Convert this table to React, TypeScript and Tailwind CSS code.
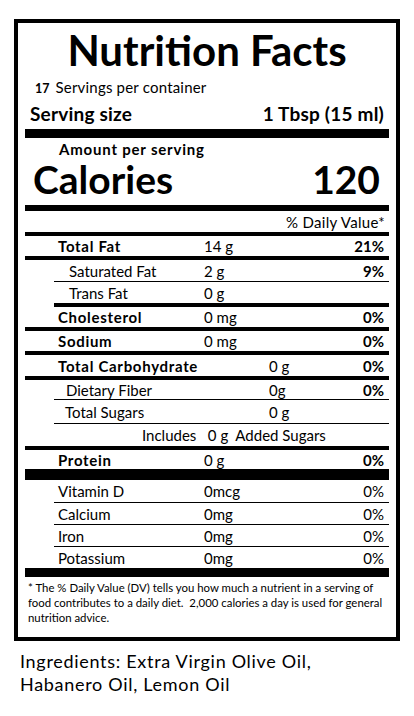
import React from "react";

type Row = {
  label: string;
  amount?: string;
  pct?: string;
  bold?: boolean;
  pctBold?: boolean;
  indent?: boolean;
  textPad: string;
  labelW: string;
  h: string;
  line: string;
};

const rows: Row[] = [
  { label: "Total Fat", amount: "14 g", pct: "21%", bold: true, pctBold: true, textPad: "pl-[33px]", labelW: "w-[179px]", h: "h-[24px]", line: "border-b-4" },
  { label: "Saturated Fat", amount: "2 g", pct: "9%", pctBold: true, indent: true, textPad: "pl-[15px]", labelW: "w-[150px]", h: "h-[22px]", line: "border-b" },
  { label: "Trans Fat", amount: "0 g", indent: true, textPad: "pl-[15px]", labelW: "w-[150px]", h: "h-[25px]", line: "border-b-4" },
  { label: "Cholesterol", amount: "0 mg", pct: "0%", bold: true, pctBold: true, textPad: "pl-[33px]", labelW: "w-[179px]", h: "h-[24px]", line: "border-b-4" },
  { label: "Sodium", amount: "0 mg", pct: "0%", bold: true, pctBold: true, textPad: "pl-[33px]", labelW: "w-[179px]", h: "h-[24px]", line: "border-b-4" },
  { label: "Total Carbohydrate", amount: "0 g", pct: "0%", bold: true, pctBold: true, textPad: "pl-[33px]", labelW: "w-[244px]", h: "h-[25px]", line: "border-b-4" },
  { label: "Dietary Fiber", amount: "0g", pct: "0%", pctBold: true, indent: true, textPad: "pl-[12px]", labelW: "w-[215px]", h: "h-[20px]", line: "border-b" },
  { label: "Total Sugars", amount: "0 g", indent: true, textPad: "pl-[11px]", labelW: "w-[215px]", h: "h-[24px]", line: "border-b" },
];

const vitamins = [
  { label: "Vitamin D", amount: "0mcg", h: "h-[23px]" },
  { label: "Calcium", amount: "0mg", h: "h-[22px]" },
  { label: "Iron", amount: "0mg", h: "h-[22px]" },
  { label: "Potassium", amount: "0mg", h: "h-[21px]" },
];

function NutrientRow({ r }: { r: Row }) {
  return (
    <div className={`flex items-center border-black ${r.h} ${r.line} ${r.indent ? "ml-[29px]" : ""}`}>
      <div className={`${r.labelW} ${r.textPad} ${r.bold ? "font-bold tracking-[0.7px]" : ""} shrink-0`}>{r.label}</div>
      <div className="flex-1">{r.amount}</div>
      <div className={`pr-[5px] ${r.pctBold ? "font-bold" : ""}`}>{r.pct}</div>
    </div>
  );
}

export default function App() {
  return (
    <div className="w-[414px] h-[716px] bg-white text-black font-['Lato','Liberation_Sans',sans-serif] overflow-hidden">
      <div className="pt-[19px] px-[14px]">
        <div className="h-[622px] border-4 border-black px-[7px] text-[15px] leading-[18px]">
          <div className="text-center text-[42px] leading-[55px] font-bold">Nutrition Facts</div>
          <div className="leading-[18px] pl-[10px]">
            <span className="font-bold text-[12.5px] mr-[6px]">17</span>
            <span className="text-[15px] tracking-[0.2px]">Servings per container</span>
          </div>
          <div className="flex justify-between text-[19px] leading-[31px] font-bold tracking-[0.2px] pl-[5px] pr-[5px]">
            <span>Serving size</span>
            <span>1 Tbsp (15 ml)</span>
          </div>
          <div className="h-[9px] bg-black" />
          <div className="pl-[34px] font-bold text-[15px] tracking-[0.8px] leading-[22px]">Amount per serving</div>
          <div className="flex justify-between text-[39px] leading-[39px] font-bold pl-[8px] pr-[9px] pb-[6px]">
            <span>Calories</span>
            <span>120</span>
          </div>
          <div className="h-[6px] bg-black" />
          <div className="h-[25px] flex items-center justify-end pr-[4px] tracking-[0.3px] border-b-4 border-black">% Daily Value*</div>
          {rows.map((r) => (
            <NutrientRow key={r.label} r={r} />
          ))}
          <div className="h-[26px] flex items-center border-b-4 border-black pl-[117px]">
            Includes&nbsp;&nbsp; 0 g&nbsp; Added Sugars
          </div>
          <div className="h-[19px] flex items-center">
            <div className="w-[179px] pl-[33px] font-bold tracking-[0.7px] shrink-0">Protein</div>
            <div className="flex-1">0 g</div>
            <div className="pr-[5px] font-bold">0%</div>
          </div>
          <div className="h-[11px] bg-black" />
          {vitamins.map((v) => (
            <div key={v.label} className={`flex items-center ${v.h} ${v.label === "Potassium" ? "" : "border-b border-black ml-[29px]"}`}>
              <div className={`${v.label === "Potassium" ? "w-[179px] pl-[33px]" : "w-[150px] pl-[4px]"} shrink-0`}>{v.label}</div>
              <div className="flex-1">{v.amount}</div>
              <div className="pr-[5px]">0%</div>
            </div>
          ))}
          <div className="h-[9px] bg-black" />
          <p className="pt-[3px] pl-[3px] pr-[1px] text-[11.4px] leading-[15px]">
            * The % Daily Value (DV) tells you how much a nutrient in a serving of food contributes to a daily diet.&nbsp; 2,000 calories a day is used for general nutrition advice.
          </p>
        </div>
      </div>
      <p className="mt-[9px] pl-[20px] pr-[60px] text-[18px] tracking-[0.7px] leading-[23px]">
        Ingredients: Extra Virgin Olive Oil, Habanero Oil, Lemon Oil
      </p>
    </div>
  );
}
